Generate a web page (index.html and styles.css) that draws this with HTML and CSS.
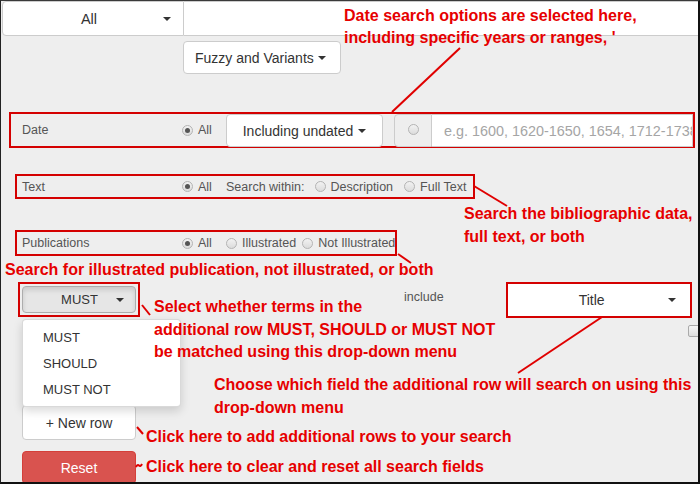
FILE: index.html
```html
<!DOCTYPE html>
<html lang="en">
<head>
<meta charset="utf-8">
<title>Advanced search</title>
<link rel="stylesheet" href="styles.css">
</head>
<body>
<div class="frame">
  <div class="topbar">
    <div class="sel sel-all"><span class="sel-label">All</span><span class="caret"></span></div>
    <div class="search-input"></div>
  </div>

  <div class="fuzzy-row">
    <div class="btn">Fuzzy and Variants <span class="caret"></span></div>
  </div>

  <div class="frow frow-date">
    <span class="flabel">Date</span>
    <span class="radio radio-all"><span class="rb on"></span>All</span>
    <div class="btn btn-undated">Including undated <span class="caret"></span></div>
    <div class="igroup">
      <span class="addon"><span class="rb"></span></span>
      <span class="dinput">e.g. 1600, 1620-1650, 1654, 1712-1738</span>
    </div>
  </div>

  <div class="frow frow-text">
    <span class="flabel">Text</span>
    <span class="radio radio-all"><span class="rb on"></span>All</span>
    <span class="within">Search within:</span>
    <span class="radio gap10"><span class="rb"></span>Description</span>
    <span class="radio"><span class="rb"></span>Full Text</span>
  </div>

  <div class="frow frow-pub">
    <span class="flabel">Publications</span>
    <span class="radio radio-all"><span class="rb on"></span>All</span>
    <span class="radio gap6"><span class="rb"></span>Illustrated</span>
    <span class="radio"><span class="rb"></span>Not Illustrated</span>
  </div>

  <div class="addrow">
    <div class="hl hl-must">
      <div class="sel sel-must"><span class="sel-label">MUST</span><span class="caret"></span></div>
    </div>
    <span class="include">include</span>
    <div class="hl hl-title">
      <div class="sel sel-title"><span class="sel-label">Title</span><span class="caret"></span></div>
    </div>
  </div>

  <div class="check-row"><span class="cb"></span></div>

  <div class="btn btn-wide btn-newrow">+ New row</div>
  <div class="btn btn-wide btn-reset">Reset</div>

  <ul class="menu">
    <li>MUST</li>
    <li>SHOULD</li>
    <li>MUST NOT</li>
  </ul>

  <svg class="lines" width="700" height="484" viewBox="0 0 700 484">
    <g stroke="#e00000" stroke-width="2" fill="none">
      <line x1="392" y1="112" x2="460" y2="48"/>
      <line x1="474" y1="186" x2="507" y2="206"/>
      <line x1="398" y1="254" x2="411" y2="263"/>
      <line x1="142" y1="305" x2="150" y2="315"/>
      <line x1="518" y1="373" x2="602" y2="317"/>
      <line x1="137" y1="427" x2="143" y2="434"/>
      <path d="M136 467 q1.5 -3 3 -1.5 t3 -1.5"/>
    </g>
  </svg>

  <p class="note note-date">Date search options are selected here,<br>including specific years or ranges, '</p>
  <p class="note note-text">Search the bibliographic data,<br>full text, or both</p>
  <p class="note note-pub">Search for illustrated publication, not illustrated, or both</p>
  <p class="note note-must">Select whether terms in the<br>additional row MUST, SHOULD or MUST NOT<br>be matched using this drop-down menu</p>
  <p class="note note-title">Choose which field the additional row will search on using this<br>drop-down menu</p>
  <p class="note note-new">Click here to add additional rows to your search</p>
  <p class="note note-reset">Click here to clear and reset all search fields</p>
</div>
</body>
</html>
```

FILE: styles.css
```css
* { box-sizing: border-box; }
html, body { margin: 0; padding: 0; background: #fff; }
body { font-family: "Liberation Sans", Arial, sans-serif; color: #333; }

.frame {
  position: relative;
  width: 700px;
  height: 484px;
  overflow: hidden;
  background: #eeeeee;
  border-top: 1px solid #3a3a3a;
  border-left: 1px solid #222;
  border-right: 2px solid #111;
  border-bottom: 2px solid #111;
}

/* caret */
.caret {
  display: inline-block;
  width: 0;
  height: 0;
  border-top: 4px solid #333;
  border-left: 4px solid transparent;
  border-right: 4px solid transparent;
  vertical-align: middle;
}

/* top bar */
.topbar { display: flex; height: 35px; margin-left: 1px; }
.sel {
  display: flex;
  align-items: center;
  background: #fff;
  border: 1px solid #ccc;
  font-size: 14px;
  color: #333;
}
.sel-label { flex: 1; text-align: center; }
.sel .caret { margin-right: 12px; }
.sel-all { width: 182px; border-radius: 4px 0 0 4px; padding-left: 12px; font-size: 14.5px; }
.search-input { flex: 1; background: #fff; border: 1px solid #ccc; border-left: none; margin-right: -4px; }

.btn {
  display: inline-flex;
  align-items: center;
  gap: 4px;
  height: 33px;
  padding: 0 11px;
  background: #fff;
  border: 1px solid #ccc;
  border-radius: 4px;
  font-size: 14px;
  color: #333;
  white-space: nowrap;
  flex: none;
}

.fuzzy-row { padding-left: 182px; margin-top: 5px; }
.fuzzy-row .btn { width: 158px; }

/* filter rows */
.frow {
  display: flex;
  align-items: center;
  border: 2px solid #d40000;
  font-size: 12.5px;
  color: #555;
}
.flabel { width: 160px; flex: none; }
.radio { display: inline-flex; align-items: center; gap: 5px; white-space: nowrap; }
.radio-all { width: 44px; flex: none; }
.gap10 { margin-right: 11px; }
.gap6 { margin-right: 6px; }
.within { margin-right: 10px; }

.rb {
  display: inline-block;
  position: relative;
  width: 11px;
  height: 11px;
  border-radius: 50%;
  border: 1px solid #b4b4b4;
  background: linear-gradient(#f2f2f2, #dcdcdc);
  flex: none;
}
.rb.on::after {
  content: "";
  position: absolute;
  left: 2px; top: 2px;
  width: 5px; height: 5px;
  border-radius: 50%;
  background: #555;
}

.frow-date {
  margin: 38px 0 0 8px;
  width: 686px;
  height: 36px;
  padding-left: 11px;
  align-items: stretch;
}
.frow-date .flabel, .frow-date .radio-all { align-self: center; }
.btn-undated { width: 157px; height: 33px; justify-content: center; gap: 5px; }
.igroup { display: flex; margin-left: 11px; flex: 1; min-width: 0; height: 33px; }
.addon {
  width: 38px;
  flex: none;
  display: flex;
  align-items: center;
  justify-content: center;
  background: #eee;
  border: 1px solid #ccc;
  border-radius: 4px 0 0 4px;
}
.addon .rb { margin-top: -2px; }
.dinput {
  flex: 1;
  min-width: 0;
  display: flex;
  align-items: center;
  padding-left: 12px;
  background: #fff;
  border: 1px solid #ccc;
  border-left: none;
  color: #a5a5a5;
  font-size: 14.4px;
  white-space: nowrap;
  overflow: hidden;
}

.frow-text {
  margin: 26px 0 0 14px;
  width: 460px;
  height: 25px;
  padding-left: 5px;
}
.frow-pub {
  margin: 31px 0 0 14px;
  width: 382px;
  height: 26px;
  padding-left: 5px;
}

/* additional row */
.addrow { display: flex; align-items: center; margin-top: 26px; height: 35px; }
.hl { border: 2px solid #d40000; }
.hl-must { margin-left: 17px; padding: 2px; width: 122px; height: 35px; }
.sel-must {
  height: 27px;
  background: #e6e6e6;
  border-color: #adadad;
  border-radius: 4px;
  padding-left: 20px;
  font-size: 13px;
  box-shadow: inset 0 3px 5px rgba(0,0,0,.125);
}
.sel-must .caret { margin-right: 11px; }
.include { margin-left: 264px; font-size: 12.5px; color: #555; align-self: flex-start; margin-top: 8px; }
.hl-title { margin-left: 62px; width: 186px; height: 36px; }
.sel-title { height: 32px; border: none; padding-left: 8px; font-size: 14px; }
.sel-title .caret { margin-right: 14px; }

.check-row { display: flex; justify-content: flex-end; margin-top: 8px; }
.cb {
  width: 12px; height: 12px;
  border: 1px solid #aaa;
  border-radius: 2px;
  background: linear-gradient(#f6f6f6, #dedede);
  margin-right: -2px;
}

.btn-wide { display: flex; justify-content: center; width: 114px; margin-left: 21px; }
.btn-newrow { margin-top: 68px; height: 35px; font-size: 14px; }
.btn-reset {
  margin-top: 11px;
  height: 33px;
  background: #d9534f;
  border-color: #d43f3a;
  color: #fff;
}

/* dropdown menu */
.menu {
  position: absolute;
  left: 21px;
  top: 318px;
  width: 159px;
  height: 88px;
  margin: 0;
  padding: 5px 0;
  list-style: none;
  background: #fff;
  border: 1px solid rgba(0,0,0,.15);
  border-radius: 4px;
  box-shadow: 0 4px 10px rgba(0,0,0,.15);
  font-size: 13px;
  color: #333;
}
.menu li { padding: 0 20px; height: 26px; line-height: 26px; }

/* annotation overlay */
.lines { position: absolute; left: -1px; top: -1px; pointer-events: none; }
.note {
  position: absolute;
  margin: 0;
  font-family: "Liberation Sans Narrow", "Liberation Sans", Arial, sans-serif;
  font-weight: bold;
  font-size: 16px;
  line-height: 22px;
  color: #e60000;
  white-space: nowrap;
}
.note-date { left: 343px; top: 4px; }
.note-text { left: 463px; top: 201px; line-height: 23px; }
.note-pub { left: 4px; top: 258px; }
.note-must { left: 153px; top: 295px; line-height: 22.5px; }
.note-title { left: 213px; top: 372px; line-height: 23px; }
.note-new { left: 145px; top: 425px; }
.note-reset { left: 145px; top: 455px; }
```
